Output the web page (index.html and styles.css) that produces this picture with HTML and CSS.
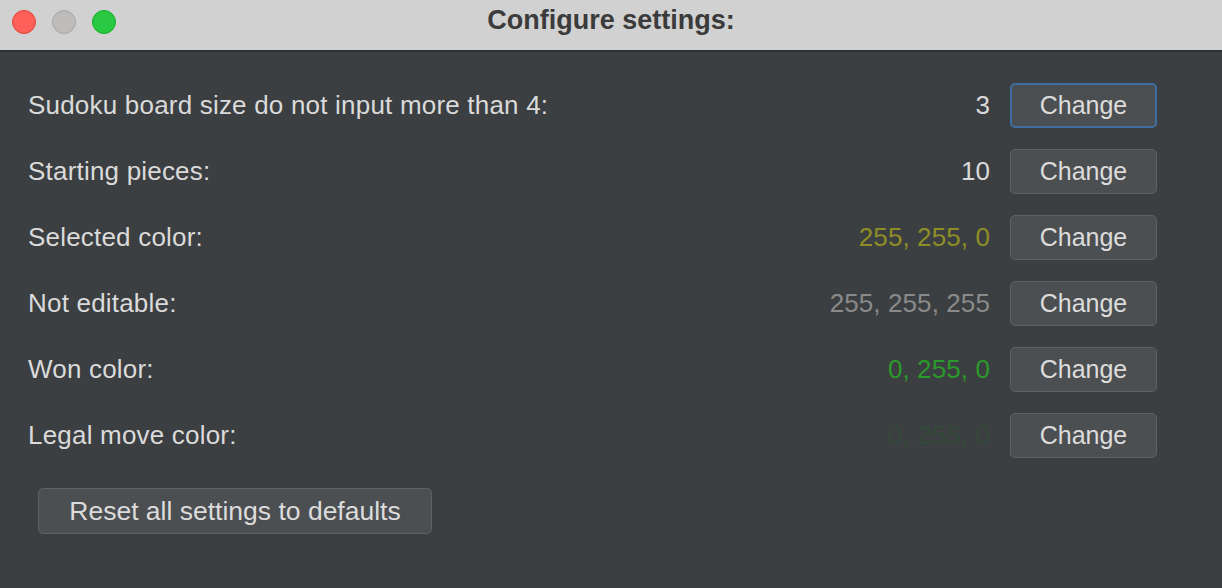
FILE: index.html
```html
<!DOCTYPE html>
<html>
<head>
<meta charset="utf-8">
<link rel="stylesheet" href="styles.css">
</head>
<body>
<div class="window">
  <div class="titlebar">
    <div class="lights">
      <span class="light red"></span>
      <span class="light gray"></span>
      <span class="light green"></span>
    </div>
    <div class="title">Configure settings:</div>
  </div>
  <div class="content">
    <div class="row">
      <span class="label">Sudoku board size do not input more than 4:</span>
      <span class="value">3</span>
      <button class="btn focused">Change</button>
    </div>
    <div class="row">
      <span class="label">Starting pieces:</span>
      <span class="value">10</span>
      <button class="btn">Change</button>
    </div>
    <div class="row">
      <span class="label">Selected color:</span>
      <span class="value v-yellow">255, 255, 0</span>
      <button class="btn">Change</button>
    </div>
    <div class="row">
      <span class="label">Not editable:</span>
      <span class="value v-gray">255, 255, 255</span>
      <button class="btn">Change</button>
    </div>
    <div class="row">
      <span class="label">Won color:</span>
      <span class="value v-green">0, 255, 0</span>
      <button class="btn">Change</button>
    </div>
    <div class="row">
      <span class="label">Legal move color:</span>
      <span class="value v-dark">0, 255, 0</span>
      <button class="btn">Change</button>
    </div>
    <div class="reset-row">
      <button class="btn reset">Reset all settings to defaults</button>
    </div>
  </div>
</div>
</body>
</html>
```
FILE: styles.css
```css
* { box-sizing: border-box; }
html, body { margin: 0; padding: 0; }
body {
  width: 1222px;
  height: 588px;
  overflow: hidden;
  background: #3c3f41;
  font-family: "Liberation Sans", Arial, sans-serif;
}
.window { display: flex; flex-direction: column; height: 588px; }
.titlebar {
  height: 52px;
  background: #d1d1d1;
  border-bottom: 2px solid #2f3133;
  display: flex;
  align-items: center;
  position: relative;
}
.lights {
  display: flex;
  gap: 16px;
  padding-left: 12px;
  margin-top: -7px;
}
.light {
  width: 24px;
  height: 24px;
  border-radius: 50%;
  display: block;
}
.red { background: #fe5f57; border: 1px solid #e0443e; }
.gray { background: #bdbcbb; border: 1px solid #a8a7a6; }
.green { background: #28c840; border: 1px solid #1aab29; }
.title {
  position: absolute;
  left: 0; right: 0;
  top: 5px;
  text-align: center;
  font-weight: bold;
  font-size: 27px;
  color: #3b3b3b;
}
.content {
  flex: 1;
  padding: 20px 0 0 28px;
}
.row {
  display: flex;
  align-items: center;
  height: 66px;
}
.label {
  flex: 1;
  font-size: 26px;
  letter-spacing: 0.2px;
  color: #dadada;
}
.value {
  font-size: 26px;
  letter-spacing: 0.1px;
  color: #dadada;
  margin-right: 20px;
}
.v-yellow { color: #8e8e26; }
.v-gray { color: #8a8a8a; }
.v-green { color: #2a9a2a; }
.v-dark { color: #33493a; }
.btn {
  font-family: "Liberation Sans", Arial, sans-serif;
  font-size: 25px;
  color: #dcdcdc;
  background: #4c4f51;
  border: 1px solid #5e6163;
  border-radius: 5px;
  width: 147px;
  height: 45px;
  margin-right: 65px;
  padding: 0;
}
.btn.focused {
  border: 2px solid #3f6ea1;
}
.reset-row {
  padding: 20px 0 0 10px;
}
.btn.reset {
  width: 394px;
  height: 46px;
  font-size: 26.5px;
}
```
